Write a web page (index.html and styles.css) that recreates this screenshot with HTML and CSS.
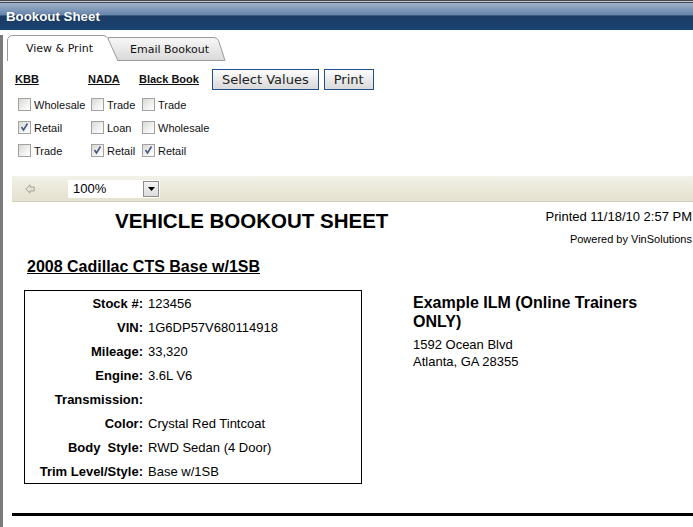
FILE: index.html
```html
<!DOCTYPE html>
<html>
<head>
<meta charset="utf-8">
<title>Bookout Sheet</title>
<link rel="stylesheet" href="styles.css">
</head>
<body>
<div class="titlebar"><span class="title-text">Bookout Sheet</span></div>
<div class="shell">
  <div class="tabs">
    <div class="tab tab-active">
      <svg class="tab-shape" width="112" height="26" viewBox="0 0 112 26"><path d="M0.5,26 L0.5,6 Q0.5,0.5 6,0.5 L96,0.5 Q99.5,0.5 101,3.5 L111,26" fill="#ffffff" stroke="#9a9a9a"/></svg>
      <span class="tab-label">View &amp; Print</span>
    </div>
    <div class="tab tab-inactive">
      <svg class="tab-shape" width="118" height="24" viewBox="0 0 118 24"><defs><linearGradient id="tg" x1="0" y1="0" x2="0" y2="1"><stop offset="0" stop-color="#f8f8f8"/><stop offset="1" stop-color="#d9d9d9"/></linearGradient></defs><path d="M0.5,23.5 L0.5,0.5 L106,0.5 Q109,0.5 110.5,3.5 L117,23.5 Z" fill="url(#tg)" stroke="#9a9a9a"/></svg>
      <span class="tab-label">Email Bookout</span>
    </div>
  </div>

  <div class="controls">
    <div class="hdr">KBB</div>
    <div class="hdr">NADA</div>
    <div class="hdr">Black Book</div>
    <div class="btns"><button class="btn">Select Values</button><button class="btn">Print</button></div>

    <label class="opt"><span class="cb"></span>Wholesale</label>
    <label class="opt"><span class="cb"></span>Trade</label>
    <label class="opt"><span class="cb"></span>Trade</label>
    <div></div>

    <label class="opt"><span class="cb"><svg width="11" height="11" viewBox="0 0 11 11"><path d="M2.5,5 L4.5,8 L8.5,1.5" fill="none" stroke="#4a5688" stroke-width="1.6"/></svg></span>Retail</label>
    <label class="opt"><span class="cb"></span>Loan</label>
    <label class="opt"><span class="cb"></span>Wholesale</label>
    <div></div>

    <label class="opt"><span class="cb"></span>Trade</label>
    <label class="opt"><span class="cb"><svg width="11" height="11" viewBox="0 0 11 11"><path d="M2.5,5 L4.5,8 L8.5,1.5" fill="none" stroke="#4a5688" stroke-width="1.6"/></svg></span>Retail</label>
    <label class="opt"><span class="cb"><svg width="11" height="11" viewBox="0 0 11 11"><path d="M2.5,5 L4.5,8 L8.5,1.5" fill="none" stroke="#4a5688" stroke-width="1.6"/></svg></span>Retail</label>
    <div></div>
  </div>

  <div class="toolbar">
    <svg class="back-icon" width="10" height="10" viewBox="0 0 10 10"><path d="M0.8,5 L5,0.8 L5,3 L9.2,3 L9.2,7 L5,7 L5,9.2 Z" fill="#e6e3d6" stroke="#a3a199" stroke-width="1"/></svg>
    <div class="zoom-select">
      <span class="zoom-value">100%</span>
      <span class="zoom-btn"><svg width="7" height="4" viewBox="0 0 7 4"><path d="M0,0 L7,0 L3.5,4 Z" fill="#000"/></svg></span>
    </div>
  </div>

  <div class="report">
    <div class="rhead">
      <h1 class="rtitle">VEHICLE BOOKOUT SHEET</h1>
      <div class="rmeta">
        <div class="printed">Printed 11/18/10 2:57 PM</div>
        <div class="powered">Powered by VinSolutions</div>
      </div>
    </div>
    <h2 class="vehicle">2008 Cadillac CTS Base w/1SB</h2>
    <div class="rmain">
      <div class="specs">
        <div class="lbl">Stock #:</div><div class="val">123456</div>
        <div class="lbl">VIN:</div><div class="val">1G6DP57V680114918</div>
        <div class="lbl">Mileage:</div><div class="val">33,320</div>
        <div class="lbl">Engine:</div><div class="val">3.6L V6</div>
        <div class="lbl">Transmission:</div><div class="val"></div>
        <div class="lbl">Color:</div><div class="val">Crystal Red Tintcoat</div>
        <div class="lbl">Body&nbsp; Style:</div><div class="val">RWD Sedan (4 Door)</div>
        <div class="lbl">Trim Level/Style:</div><div class="val">Base w/1SB</div>
      </div>
      <div class="dealer">
        <div class="dealer-name">Example ILM (Online Trainers ONLY)</div>
        <div class="dealer-addr">1592 Ocean Blvd<br>Atlanta, GA 28355</div>
      </div>
    </div>
    <div class="rule"></div>
  </div>
</div>
</body>
</html>
```

FILE: styles.css
```css
html, body {
  margin: 0;
  padding: 0;
  background: #ffffff;
  font-family: "Liberation Sans", Arial, sans-serif;
  color: #000;
  overflow: hidden;
}

.titlebar {
  height: 30px;
  display: flex;
  align-items: center;
  padding-left: 6px;
  box-sizing: border-box;
  background: linear-gradient(to bottom,
    #4a4a4a 0px, #4a4a4a 1px,
    #c4c8cc 1px, #c4c8cc 2px,
    #3c4a5c 2px, #3c4a5c 3px,
    #9fb2c9 3px, #7d97b7 10px, #6684a9 15px,
    #3a5a82 15px, #3a5a82 16px,
    #1b3b64 16px, #1a3f6c 24px, #1b4574 30px);
}

.title-text {
  color: #ffffff;
  font-family: "Liberation Sans", Arial, sans-serif;
  font-weight: bold;
  font-size: 13.3px;
  padding-top: 2px;
  text-shadow: 0 0 1px rgba(0,0,0,0.4);
}

.shell {
  border-left: 3px solid #7b7b7b;
  min-height: 497px;
}

/* Tabs */
.tabs {
  display: flex;
  align-items: flex-end;
  padding-left: 4px;
  margin-top: 5px;
  height: 26px;
}

.tab {
  position: relative;
  display: flex;
  align-items: center;
  font-family: "DejaVu Sans", Verdana, sans-serif;
  font-size: 11px;
  color: #111;
}

.tab-shape {
  position: absolute;
  left: 0;
  top: 0;
}

.tab-label {
  position: relative;
}

.tab-active {
  width: 112px;
  height: 26px;
  z-index: 2;
  padding-left: 19px;
  box-sizing: border-box;
}

.tab-inactive {
  width: 118px;
  height: 24px;
  margin-left: -11px;
  z-index: 1;
  padding-left: 22px;
  box-sizing: border-box;
}

/* Controls */
.controls {
  display: grid;
  grid-template-columns: 73px 51px 73px auto;
  grid-template-rows: 24px 23px 23px 23px;
  margin-top: 8px;
  margin-left: 12px;
  align-items: center;
}

.hdr {
  font-weight: bold;
  font-size: 11px;
  text-decoration: underline;
  align-self: center;
  margin-top: -4px;
  color: #111;
}

.btns {
  display: flex;
  gap: 5px;
  align-self: start;
}

.btn {
  font-family: "DejaVu Sans", Verdana, sans-serif;
  font-size: 13px;
  height: 21px;
  padding: 0 9px;
  border: 1px solid #23508a;
  background: linear-gradient(to bottom, #fdfdfd, #e6e6e6 60%, #d9d9d9);
  color: #222;
  margin: 0;
  line-height: 19px;
}

.opt {
  display: flex;
  align-items: center;
  font-size: 11px;
  padding-left: 3px;
  color: #111;
  white-space: nowrap;
}

.cb {
  width: 13px;
  height: 13px;
  box-sizing: border-box;
  border: 1px solid #a2a2a2;
  background: linear-gradient(135deg, #d8d8d4 0%, #f2f2f0 60%, #ffffff 100%);
  margin-right: 3px;
  display: flex;
  align-items: center;
  justify-content: center;
}

/* Toolbar */
.toolbar {
  margin-top: 14px;
  margin-left: 9px;
  height: 26px;
  box-sizing: border-box;
  display: flex;
  align-items: center;
  background: linear-gradient(to bottom, #f3f2ea, #ebe8da 50%, #e4e1d0);
  border-bottom: 1px solid #d3cfbd;
}

.back-icon {
  margin-left: 13px;
}

.zoom-select {
  margin-left: 33px;
  width: 92px;
  height: 18px;
  background: #ffffff;
  display: flex;
  align-items: center;
  justify-content: space-between;
  box-sizing: border-box;
  padding: 0 1px 0 5px;
}

.zoom-value {
  font-size: 13px;
}

.zoom-btn {
  width: 16px;
  height: 16px;
  box-sizing: border-box;
  border: 1px solid #8d8d8d;
  background: linear-gradient(to bottom, #f4f4f4, #dcdcdc);
  display: flex;
  align-items: center;
  justify-content: center;
}

/* Report */
.report {
  margin-left: 9px;
  padding-top: 7px;
}

.rhead {
  display: flex;
  justify-content: space-between;
  align-items: flex-start;
}

.rtitle {
  margin: 0 0 0 103px;
  font-size: 20.5px;
  font-weight: bold;
  line-height: 23px;
}

.rmeta {
  text-align: right;
  padding-right: 1px;
}

.printed {
  font-size: 13px;
  line-height: 15px;
}

.powered {
  font-size: 11px;
  line-height: 13px;
  margin-top: 9px;
}

.vehicle {
  margin: 12px 0 0 15px;
  font-size: 16px;
  line-height: 18px;
  font-weight: bold;
  text-decoration: underline;
}

.rmain {
  display: flex;
  align-items: flex-start;
  margin-top: 14px;
}

.specs {
  margin-left: 12px;
  width: 338px;
  box-sizing: border-box;
  border: 1px solid #000;
  display: grid;
  grid-template-columns: 118px 1fr;
  column-gap: 5px;
  grid-auto-rows: 24px;
  align-items: center;
  font-size: 13px;
}

.lbl {
  text-align: right;
  font-weight: bold;
  white-space: nowrap;
}

.val {
  white-space: nowrap;
}

.dealer {
  margin-left: 51px;
  margin-top: 3px;
}

.dealer-name {
  font-size: 16px;
  font-weight: bold;
  line-height: 19px;
  width: 240px;
}

.dealer-addr {
  font-size: 13px;
  line-height: 17px;
  margin-top: 5px;
}

.rule {
  margin-top: 29px;
  border-top: 3px solid #000;
}
```
